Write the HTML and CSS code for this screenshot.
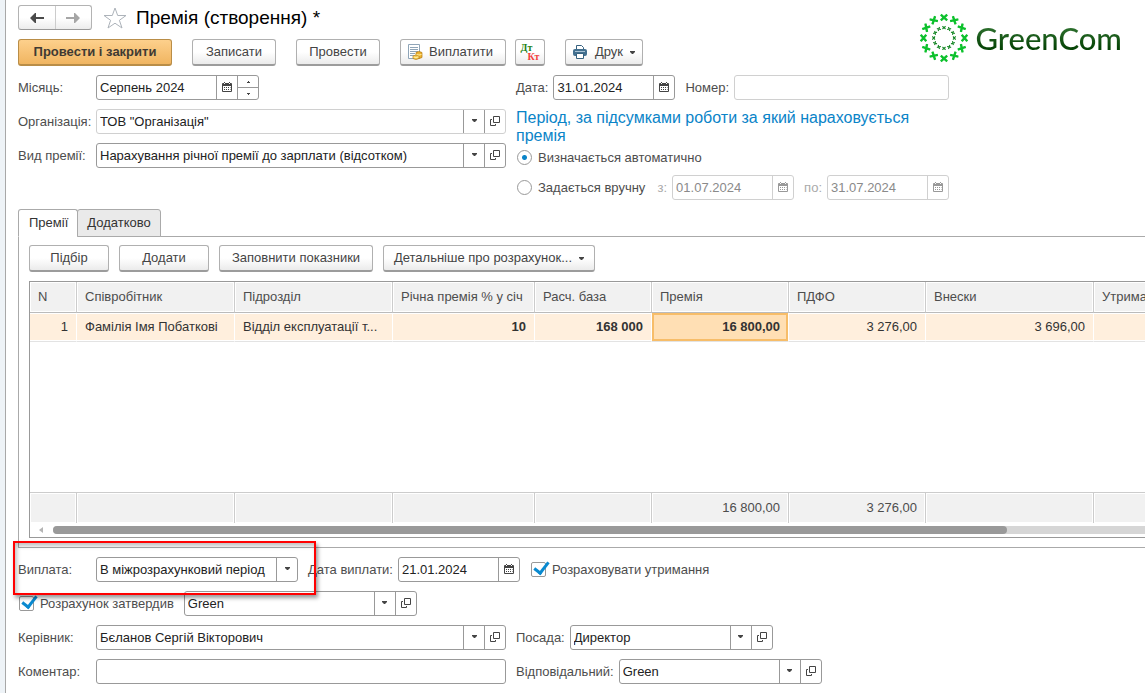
FILE: index.html
```html
<!DOCTYPE html>
<html lang="uk">
<head>
<meta charset="utf-8">
<title>Премія (створення) *</title>
<link rel="stylesheet" href="styles.css">
</head>
<body>
<svg class="sprite" aria-hidden="true">
  <symbol id="cal" viewBox="0 0 10 10"><path fill="currentColor" d="M1 1h1V0h1v1h4V0h1v1h1q1 0 1 1v7q0 1-1 1H1q-1 0-1-1V2q0-1 1-1z"/><path fill="#fff" d="M2 1h1v1H2zM7 1h1v1H7zM1 4h8v5H1z"/><path fill="currentColor" d="M2 5h1v1H2zM4 5h1v1H4zM6 5h1v1H6zM2 7h1v1H2zM4 7h1v1H4zM6 7h1v1H6zM8 5h.500v1H8zM8 7h.500v1H8z"/></symbol>
  <symbol id="down" viewBox="0 0 5 3"><path fill="currentColor" d="M0 0h5v1L3 3H2L0 1z"/></symbol>
  <symbol id="open" viewBox="0 0 10 10"><path fill="none" stroke="currentColor" d="M3.500 .5h6v6h-6zM2 3.500H.5v6h5V8"/></symbol>
  <symbol id="x" viewBox="-5 -5 10 10"><path fill="none" stroke="currentColor" stroke-width="3" d="M-4-3.500Q0 0 4 3.500M4-3.500Q0 0-4 3.500"/></symbol>
</svg>
<main class="page">
  <header class="head">
    <div class="head-main">
      <div class="title-row">
        <div class="nav">
          <button aria-label="Назад"><svg width="14" height="10" viewBox="0 0 14 10"><path fill="#4a4a4a" d="M0 5L5 0h1v4h8v2H6v4H5z"/></svg></button>
          <button class="off" aria-label="Вперед"><svg width="14" height="10" viewBox="0 0 14 10"><path fill="#a6a6a6" d="M14 5L9 0H8v4H0v2h8v4h1z"/></svg></button>
        </div>
        <svg class="star" width="24" height="22" viewBox="0 0 24 22"><path fill="#fff" stroke="#adb3ba" d="M12 1l2.700 7.500H23l-6.600 4.800L19 21l-7-4.800L5 21l2.600-7.700L1 8.500h8.300z"/></svg>
        <h1>Премія (створення) *</h1>
      </div>
      <div class="toolbar">
        <button class="btn primary">Провести і закрити</button>
        <button class="btn">Записати</button>
        <button class="btn">Провести</button>
        <div class="pair">
          <button class="btn icon-btn"><svg width="16" height="16" viewBox="0 0 16 16"><path fill="#fff" stroke="#8fa5b8" d="M1.500 .5h11v14h-11z"/><path stroke="#8fa5b8" d="M3 3.500h8M3 5.500h8M3 7.500h8M3 9.500h5M3 11.500h4"/><path fill="#efb32f" stroke="#b27a17" stroke-width=".7" d="M9 8.500q3-2 6 0v5q-3 2-6 0z"/><path fill="#f6ca50" stroke="#b27a17" stroke-width=".7" d="M6 12q3-2 6 0v2.500q-3 2-6 0z"/><path fill="none" stroke="#fff0a0" d="M9.500 10.500q2.500 1 5 0M6.500 13q2.500 1 5 0"/></svg>Виплатити</button>
          <button class="btn square" aria-label="Дт Кт"><span class="dt">Дт</span><span class="kt">Кт</span></button>
        </div>
        <button class="btn icon-btn print"><svg width="14" height="14" viewBox="0 0 14 14"><path fill="#fff" stroke="#36617f" d="M3.500 5V.5h5l2 2V5"/><rect y="4" width="14" height="7" rx="2" fill="#426f8f"/><path stroke="#a8c2d4" d="M2 6.500h10"/><path fill="#fff" stroke="#36617f" d="M3.500 8.500h7v5h-7z"/></svg>Друк<svg class="caret" width="5" height="3"><use href="#down"/></svg></button>
      </div>
    </div>
    <div class="logo">
      <svg width="50" height="50" viewBox="-25 -25 50 50">
        <defs>
          <g id="pair"><use href="#x" x="-4" y="-24.500" width="8" height="8" color="#0cc12c"/><use href="#x" x="-2" y="-12.300" width="4" height="4" color="#1b8a2b"/></g>
          <g id="quad"><use href="#pair"/><use href="#pair" transform="rotate(30)"/><use href="#pair" transform="rotate(60)"/></g>
        </defs>
        <use href="#quad"/><use href="#quad" transform="rotate(90)"/><use href="#quad" transform="rotate(180)"/><use href="#quad" transform="rotate(270)"/>
      </svg>
      <span>GreenCom</span>
    </div>
  </header>

  <section class="fields">
    <div class="stack left">
      <div class="row"><label class="cap" for="month">Місяць:</label>
        <div class="box month"><input id="month" value="Серпень 2024"><button aria-label="Календар"><svg width="10" height="10"><use href="#cal"/></svg></button>
          <div class="spin"><button aria-label="Більше"><svg width="3" height="2" viewBox="0 0 3 2"><path fill="#444" d="M1 0h1v1h1v1H0V1h1z"/></svg></button><button aria-label="Менше"><svg width="3" height="2" viewBox="0 0 3 2"><path fill="#444" d="M0 0h3v1H2v1H1V1H0z"/></svg></button></div></div></div>
      <div class="row"><label class="cap" for="org">Організація:</label>
        <div class="box grow light"><div class="sel"><select id="org"><option>ТОВ "Організація"</option></select><span class="arrow"><svg width="5" height="3"><use href="#down"/></svg></span></div><button aria-label="Відкрити"><svg width="10" height="10"><use href="#open"/></svg></button></div></div>
      <div class="row"><label class="cap" for="kind">Вид премії:</label>
        <div class="box grow"><div class="sel"><select id="kind"><option>Нарахування річної премії до зарплати (відсотком)</option></select><span class="arrow"><svg width="5" height="3"><use href="#down"/></svg></span></div><button aria-label="Відкрити"><svg width="10" height="10"><use href="#open"/></svg></button></div></div>
    </div>
    <div class="right">
      <div class="row"><label for="date">Дата:</label>
        <div class="box date"><input id="date" value="31.01.2024"><button aria-label="Календар"><svg width="10" height="10"><use href="#cal"/></svg></button></div>
        <label class="next" for="num">Номер:</label><div class="box grow light"><input id="num"></div></div>
      <h2>Період, за підсумками роботи за який нараховується премія</h2>
      <div class="row"><label class="choice"><input type="radio" name="period" checked>Визначається автоматично</label></div>
      <div class="row manual"><label class="choice"><input type="radio" name="period">Задається вручну</label>
        <label class="dim push" for="from">з:</label><div class="box date light dim"><input id="from" value="01.07.2024" disabled><button disabled aria-label="Календар"><svg width="10" height="10"><use href="#cal"/></svg></button></div>
        <label class="dim next" for="to">по:</label><div class="box date light dim"><input id="to" value="31.07.2024" disabled><button disabled aria-label="Календар"><svg width="10" height="10"><use href="#cal"/></svg></button></div></div>
    </div>
  </section>

  <div class="tabs" role="tablist"><button role="tab" class="tab active" aria-selected="true">Премії</button><button role="tab" class="tab" aria-selected="false">Додатково</button></div>
  <section class="panel">
    <div class="actions">
      <button class="btn pick">Підбір</button><button class="btn add">Додати</button><button class="btn fill">Заповнити показники</button><button class="btn more">Детальніше про розрахунок...<svg class="caret" width="5" height="3"><use href="#down"/></svg></button>
    </div>
    <div class="grid">
      <table>
        <colgroup><col class="c1"><col class="c2"><col class="c2"><col class="c3"><col class="c4"><col class="c5"><col class="c5"><col class="c6"><col class="c5"></colgroup>
        <thead><tr><th>N</th><th>Співробітник</th><th>Підрозділ</th><th>Річна премія % у січ</th><th>Расч. база</th><th>Премія</th><th>ПДФО</th><th>Внески</th><th>Утримання</th></tr></thead>
        <tbody>
          <tr class="item"><td class="n">1</td><td>Фамілія Імя Побаткові</td><td>Відділ експлуатації т...</td><td class="n b">10</td><td class="n b">168 000</td><td class="n b current">16 800,00</td><td class="n">3 276,00</td><td class="n">3 696,00</td><td></td></tr>
          <tr class="blank"><td colspan="9"></td></tr>
        </tbody>
        <tfoot><tr><td></td><td></td><td></td><td></td><td></td><td class="n">16 800,00</td><td class="n">3 276,00</td><td></td><td></td></tr></tfoot>
      </table>
      <div class="scroll"><svg width="4" height="6" viewBox="0 0 4 6"><path fill="#b5b5b5" d="M4 0v6L0 3z"/></svg><div class="track"><div class="thumb"></div></div></div>
    </div>
  </section>

  <section class="stack bottom">
    <div class="row"><label class="cap" for="pay">Виплата:</label>
      <div class="box pay"><div class="sel"><select id="pay"><option>В міжрозрахунковий період</option></select><span class="arrow"><svg width="5" height="3"><use href="#down"/></svg></span></div></div>
      <label class="next" for="paydate">Дата виплати:</label><div class="box date"><input id="paydate" value="21.01.2024"><button aria-label="Календар"><svg width="10" height="10"><use href="#cal"/></svg></button></div>
      <label class="choice after"><input type="checkbox" checked>Розраховувати утримання</label>
      <div class="mark"></div></div>
    <div class="row"><label class="choice" id="ok"><input type="checkbox" checked>Розрахунок затвердив</label>
      <div class="box approver"><div class="sel"><select aria-labelledby="ok"><option>Green</option></select><span class="arrow"><svg width="5" height="3"><use href="#down"/></svg></span></div><button aria-label="Відкрити"><svg width="10" height="10"><use href="#open"/></svg></button></div></div>
    <div class="row"><div class="row left"><label class="cap" for="head">Керівник:</label>
      <div class="box grow"><div class="sel"><select id="head"><option>Бєланов Сергій Вікторович</option></select><span class="arrow"><svg width="5" height="3"><use href="#down"/></svg></span></div><button aria-label="Відкрити"><svg width="10" height="10"><use href="#open"/></svg></button></div></div>
      <label class="next" for="post">Посада:</label><div class="box ref"><div class="sel"><select id="post"><option>Директор</option></select><span class="arrow"><svg width="5" height="3"><use href="#down"/></svg></span></div><button aria-label="Відкрити"><svg width="10" height="10"><use href="#open"/></svg></button></div></div>
    <div class="row"><div class="row left"><label class="cap" for="note">Коментар:</label><div class="box grow"><input id="note"></div></div>
      <label class="next" for="resp">Відповідальний:</label><div class="box ref"><div class="sel"><select id="resp"><option>Green</option></select><span class="arrow"><svg width="5" height="3"><use href="#down"/></svg></span></div><button aria-label="Відкрити"><svg width="10" height="10"><use href="#open"/></svg></button></div></div>
  </section>
</main>
</body>
</html>
```

FILE: styles.css
```css
* { box-sizing: border-box; }
body { margin: 0; background: #eef3f7; color: #4d4d4d; font: 13px/16px "Liberation Sans", Arial, sans-serif; overflow-x: hidden; }
button, input, select { font: inherit; color: inherit; margin: 0; }
svg { display: block; flex: none; }
.sprite { position: absolute; width: 0; height: 0; }
.page { margin-left: 5px; min-height: 100vh; padding: 5px 0 9px 12px; border-left: 1px solid #a8a8a8; background: #fff; }

.head { display: flex; justify-content: space-between; padding-right: 23px; }
.title-row { display: flex; align-items: center; height: 25px; }
.nav { display: flex; width: 74px; height: 25px; border: 1px solid #b3b3b3; border-bottom-color: #999; border-radius: 3px; background: linear-gradient(#fff 50%, #ececec); }
.nav button { flex: 1; display: flex; align-items: center; justify-content: center; border: 0; padding: 0; background: none; }
.nav .off { border-left: 1px solid #ccc; }
.star { margin: 0 9px 0 11px; }
h1 { margin: 0; font-size: 19px; line-height: 24px; font-weight: 400; color: #000; }
.toolbar { display: flex; gap: 20px; margin-top: 9px; }
.toolbar .btn { min-width: 84px; }
.pair { display: flex; gap: 9px; }
.btn { display: flex; align-items: center; justify-content: center; height: 27px; padding: 0 12px; border: 1px solid #b0b0b0; border-bottom: 2px solid #9c9c9c; border-radius: 3px; background: linear-gradient(#fff 50%, #ebebeb); white-space: nowrap; color: #444; }
.toolbar .primary { min-width: 154px; border-color: #b98d47; background: linear-gradient(#fdd08c, #f0b561); font-weight: 700; color: #3f3a33; }
.icon-btn { padding: 0 12px 0 6px; gap: 6px; }
.toolbar .print { min-width: 78px; padding: 0 6px; gap: 8px; }
.caret { margin-left: 7px; }
.print .caret { margin-left: -1px; }
.toolbar .square { min-width: 30px; padding: 0; flex-direction: column; font: 700 10px/9px "Liberation Serif", serif; }
.dt { color: #1d7f14; margin-right: 7px; }
.kt { color: #f3403c; margin-left: 7px; }
.logo { display: flex; align-items: center; gap: 6px; height: 50px; margin-top: 8px; }
.logo span { font: 500 31px/40px Lato, sans-serif; color: transparent; background: linear-gradient(#2f7230 20%, #064406 75%); -webkit-background-clip: text; background-clip: text; }

.fields { display: flex; gap: 10px; margin-top: 9px; }
.left { width: 488px; flex: none; }
.right { width: 433px; }
.stack { display: flex; flex-direction: column; gap: 9px; }
.row { display: flex; align-items: center; gap: 5px; height: 25px; position: relative; white-space: nowrap; }
.row .cap { width: 73px; flex: none; }
.next { margin-left: 5px; }
.push { margin-left: auto; }
.box { display: flex; height: 25px; border: 1px solid #999; border-radius: 3px; background: #fff; color: #222; overflow: hidden; }
.light { border-color: #d0d0d0; }
.grow { flex: 1; min-width: 0; }
.date { width: 122px; }
.month { width: 163px; }
.pay { width: 202px; }
.ref { width: 203px; }
.approver { width: 233px; margin-left: 5px; }
.box input { flex: 1; min-width: 0; width: 0; border: 0; padding: 0 3px; background: none; outline: 0; }
.box > button { width: 21px; flex: none; padding: 0 0 2px; display: flex; align-items: center; justify-content: center; border: 0; border-left: 1px solid #999; background: none; color: #444; }
.sel { flex: 1; min-width: 0; display: grid; grid-template-columns: 1fr 21px; }
.sel select { grid-area: 1 / 1 / 2 / 3; min-width: 0; appearance: none; border: 0; padding: 0 3px; background: none; outline: 0; }
.arrow { grid-area: 1 / 2; display: flex; align-items: center; justify-content: center; padding-bottom: 2px; border-left: 1px solid #999; pointer-events: none; color: #444; }
.spin { width: 21px; display: flex; flex-direction: column; border-left: 1px solid #999; }
.spin button { flex: 1; display: flex; align-items: center; justify-content: center; border: 0; padding: 0; background: none; }
.spin button + button { border-top: 1px solid #999; }
.dim, .dim input { color: #8a8a8a; }
label.dim { color: #aaa; }
.dim > button { border-color: #d0d0d0; color: #999; }
h2 { margin: 9px 0 0; font-size: 16px; line-height: 18px; font-weight: 400; color: #0a84c8; }
.manual { margin-top: 5px; }
.choice { display: flex; align-items: center; gap: 6px; }
.choice input { appearance: none; flex: none; width: 15px; height: 15px; border: 1px solid #999; background: #fff; }
.choice input[type=radio] { margin-left: 1px; border-radius: 50%; }
.choice input[type=radio]:checked { background: radial-gradient(circle, #0a84c8 2px, #fff 3px); }
.choice input[type=checkbox] { margin-left: 1px; border-radius: 2px; position: relative; }
.choice input[type=checkbox]:checked::after { content: ""; position: absolute; left: 5px; top: -4px; width: 6px; height: 12px; border: solid #0a8ad0; border-width: 0 3px 3px 0; transform: rotate(38deg); }

.tabs { display: flex; margin-top: 9px; position: relative; z-index: 1; }
.tab { height: 28px; margin-bottom: -1px; padding: 0 9px; border: 1px solid #aaa; border-radius: 3px 3px 0 0; background: #eaeaea; color: #333; }
.tab.active { padding-left: 10px; background: #fff; border-bottom-color: #fff; }
.tab + .tab { margin-left: -1px; }
.panel { padding: 8px 0 9px 10px; border: 1px solid #aaa; border-right: 0; }
.actions { display: flex; gap: 10px; }
.pick { width: 80px; }
.add { width: 90px; }
.fill { width: 154px; }
.more { width: 212px; }
.grid { margin-top: 9px; border: 1px solid #999; border-right: 0; overflow: hidden; }
table { width: 1201px; table-layout: fixed; border-collapse: separate; border-spacing: 0; }
.c1 { width: 47px; } .c2 { width: 158px; } .c3 { width: 142px; } .c4 { width: 117px; } .c5 { width: 137px; } .c6 { width: 168px; }
th, td { padding: 0 8px; text-align: left; font-weight: 400; white-space: nowrap; }
th { height: 31px; background: #f1f1f1; border-right: 1px solid #ccc; border-bottom: 1px solid #bbb; box-shadow: inset 0 0 0 1px #fff; }
.item td { height: 29px; background: #ffefdd; border-right: 1px solid #fff; border-bottom: 1px solid #e3e3e3; color: #333; box-shadow: inset 0 1px #fff, inset 0 -1px #fff; }
td.n { text-align: right; }
.item .b { font-weight: 700; }
.item .current { background: #ffdfb4; box-shadow: inset 0 0 0 2px #f7bd69; }
.blank td { height: 150px; }
tfoot td { height: 31px; background: #f1f1f1; border-top: 1px solid #ccc; border-right: 1px solid #ccc; box-shadow: inset 0 0 0 1px #fff; }
.scroll { display: flex; align-items: center; gap: 10px; height: 14px; padding-left: 9px; }
.track { flex: 1; height: 8px; border-radius: 4px 0 0 4px; background: #d6d6d6; }
.thumb { width: 87.400%; height: 8px; border-radius: 4px; background: #999; }

.bottom { margin-top: 9px; }
.after { margin-left: 5px; }
.mark { position: absolute; left: -5px; top: -16px; width: 303px; height: 54px; border: 2px solid #f00; box-shadow: 2px 3px 4px rgba(0,0,0,.4), inset 2px 3px 4px rgba(0,0,0,.25); pointer-events: none; z-index: 2; }
```
